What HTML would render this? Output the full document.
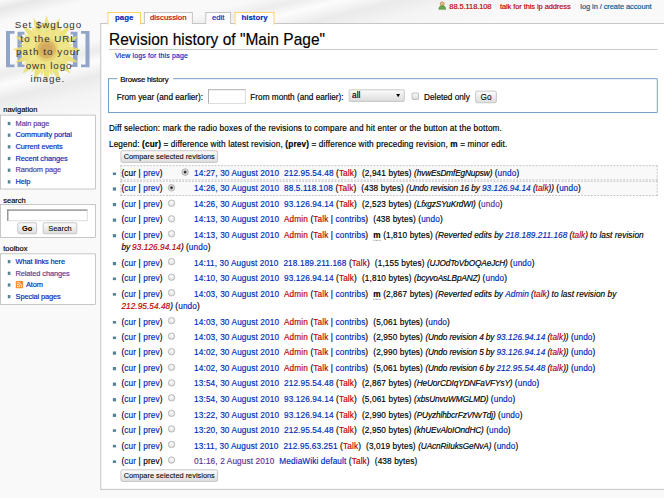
<!DOCTYPE html>
<html><head><meta charset="utf-8"><title>Revision history of "Main Page"</title>
<style>
html,body{margin:0;padding:0;width:664px;height:498px;overflow:hidden;background:#f9f9f9}
#wrap{position:absolute;left:0;top:0;width:1024px;height:768px;overflow:hidden;transform:scale(0.6484375);transform-origin:0 0;
 font-family:"Liberation Sans",sans-serif;font-size:12.7px;color:#000;background:#f9f9f9;-webkit-text-stroke:0.25px}
.bg{position:absolute;left:0;top:0;width:1024px;height:260px;
 background:
  linear-gradient(166deg,rgba(0,0,0,0) 0px,rgba(0,0,0,.07) 14px,rgba(0,0,0,0) 34px,rgba(0,0,0,0) 95px,rgba(0,0,0,.05) 112px,rgba(255,255,255,.5) 128px,rgba(0,0,0,.06) 150px,rgba(0,0,0,.02) 175px,rgba(0,0,0,0) 215px),
  #f9f9f9}
a{text-decoration:none;color:#002bb8}
a.v{color:#5a3696}
a.new{color:#ba0000}
.abs{position:absolute;white-space:nowrap}
/* personal */
#pp{position:absolute;top:0;left:0;height:20px;font-size:11.46px;line-height:12px}
#pp span{position:absolute;top:3.8px;white-space:nowrap;letter-spacing:-0.1px}
#pp a{color:#005896}
#pp a.new{color:#ba0000}
/* tabs */
.tab{position:absolute;top:19px;height:18px;border:1px solid #aaa;border-bottom:none;background:#fbfbfb;box-sizing:border-box;
 font-size:12.07px;line-height:14px;text-align:center;padding-top:0;z-index:3}
.tab.sel{border-color:#fabd23;background:#fff;font-weight:bold;height:19px}
.tab a{color:#002bb8}
.tab a.new{color:#ba0000}
/* content */
#content{position:absolute;left:155px;top:36px;width:869px;height:719px;background:#fff;border:1px solid #aaa;border-right:none;z-index:2;box-sizing:border-box}
h1{position:absolute;left:12px;top:0;width:846px;margin:0;padding:0;font-weight:normal;font-size:23.876px;line-height:28px;height:40px;border-bottom:1px solid #aaa;box-sizing:border-box}
h1 span{position:absolute;left:-0.5px;top:8.6px;font-size:25.3px;transform:scaleX(0.945);transform-origin:0 0;white-space:nowrap}
#sub{position:absolute;left:21.2px;top:42px;font-size:10.67px;line-height:12px;letter-spacing:0.25px}
#fs{position:absolute;left:11px;top:84px;width:847px;height:53px;border:1px solid #2f6fab;box-sizing:border-box}
#lg{position:absolute;left:13px;top:-7.2px;background:#fff;padding:0 7px 0 4.5px;font-size:12.07px;line-height:14px;letter-spacing:-0.35px}
.fl{position:absolute;top:20.5px;font-size:12.7px;line-height:14px}
.txt{position:absolute;box-sizing:border-box;border:1px solid #999;border-color:#888 #ccc #ccc #888;background:#fff}
.dd{position:absolute;box-sizing:border-box;border:1px solid #aaa;border-radius:2px;background:linear-gradient(#fafafa,#dcdcdc);font-size:12.7px;line-height:17px;padding-left:4px}
.dd:after{content:"";position:absolute;right:6.5px;top:5.5px;border-left:3.5px solid transparent;border-right:3.5px solid transparent;border-top:5px solid #000}
.chk{position:absolute;box-sizing:border-box;border:1px solid #999;border-radius:2px;background:linear-gradient(#fdfdfd,#d8d8d8)}
.btn{-webkit-text-stroke:0.1px;position:absolute;box-sizing:border-box;border:1px solid #a8a8a8;border-radius:3px;background:linear-gradient(#fcfcfc,#dedede);text-align:center;color:#000;white-space:nowrap}
#legend{position:absolute;left:12px;top:149px;line-height:24.4px;font-size:12.7px;letter-spacing:0.21px;white-space:nowrap}
ul#ph{position:absolute;left:30.3px;top:218px;width:828px;margin:0;padding:0;list-style:none;line-height:19px;font-size:12.7px;letter-spacing:0.2px}
#ph li{position:relative;border:1px solid #fff;padding-top:2.4px;height:auto;margin-bottom:0.5px}
#ph li.selected{background:#f9f9f9;border:1px dashed #aaa}
#ph li:before{content:"";position:absolute;left:-13px;top:9.5px;width:4.6px;height:4.6px;background:#558494}
.rd{display:inline-block;width:11px;height:11px;border-radius:50%;box-sizing:border-box;border:1px solid #9a9a9a;background:radial-gradient(circle at 50% 35%,#fcfcfc,#d6d6d6);margin:0 5px 0 4.5px;vertical-align:0.5px;position:relative}
.rd.on{background:radial-gradient(circle,#222 0,#333 1.3px,#888 2px,#d8d8d8 3px,#eee 5px);border-color:#888}
.hid{visibility:hidden}
.hu{margin-left:7.5px;margin-right:4px}
.cm{font-style:italic;letter-spacing:-0.16px}
.cm a{letter-spacing:0.1px}
.cm .w{letter-spacing:0.1px}
b.m{font-weight:bold;border-bottom:1.5px dotted #333;line-height:13px;display:inline-block}
/* sidebar */
.h3{position:absolute;left:5px;font-size:11.56px;line-height:12px;white-space:nowrap}
.pb{position:absolute;left:0;width:148px;background:#fff;border:1px solid #aaa;box-sizing:border-box}
.sb{position:absolute;left:0;top:1px;font-size:11.46px;line-height:12px;white-space:nowrap;letter-spacing:-0.18px}
.sb li{position:absolute;left:24px;list-style:none}
.sb li:before{content:"";position:absolute;left:-12.5px;top:4px;width:4.6px;height:4.6px;background:#558494}
</style></head><body>
<div id="wrap">
<div class="bg"></div>

<!-- logo -->
<svg style="position:absolute;left:0;top:0;-webkit-text-stroke:0" width="147.43" height="142.65" viewBox="0 0 95.6 92.5">
 <g fill="#8097c0" opacity="0.85">
  <path d="M6 31h8.5v2.8H10v30.7h4.5v2.8H6z"/>
  <path d="M17.5 31.8h7v2.6h-2.5v30h2.5v2.6h-7z"/>
  <path d="M89.5 31h-8.5v2.8h4.5v30.7h-4.5v2.8h8.5z"/>
  <path d="M77.5 31.8h-7v2.6h2.5v30h-2.5v2.6h7z"/>
 </g>
 <g transform="translate(46.6 49.5) scale(1.1)" opacity="0.88">
  <g fill="#ebdf6e">
   <path id="pt" d="M0 -31 C4 -20 4 -12 0 -8 C-4 -12 -4 -20 0 -31z"/>
   <use href="#pt" transform="rotate(22.5)"/><use href="#pt" transform="rotate(45)"/><use href="#pt" transform="rotate(67.5)"/>
   <use href="#pt" transform="rotate(90)"/><use href="#pt" transform="rotate(112.5)"/><use href="#pt" transform="rotate(135)"/>
   <use href="#pt" transform="rotate(157.5)"/><use href="#pt" transform="rotate(180)"/><use href="#pt" transform="rotate(202.5)"/>
   <use href="#pt" transform="rotate(225)"/><use href="#pt" transform="rotate(247.5)"/><use href="#pt" transform="rotate(270)"/>
   <use href="#pt" transform="rotate(292.5)"/><use href="#pt" transform="rotate(315)"/><use href="#pt" transform="rotate(337.5)"/>
  </g>
  <g fill="#efe37c" transform="rotate(11.25) scale(0.82)">
   <use href="#pt"/><use href="#pt" transform="rotate(22.5)"/><use href="#pt" transform="rotate(45)"/><use href="#pt" transform="rotate(67.5)"/>
   <use href="#pt" transform="rotate(90)"/><use href="#pt" transform="rotate(112.5)"/><use href="#pt" transform="rotate(135)"/>
   <use href="#pt" transform="rotate(157.5)"/><use href="#pt" transform="rotate(180)"/><use href="#pt" transform="rotate(202.5)"/>
   <use href="#pt" transform="rotate(225)"/><use href="#pt" transform="rotate(247.5)"/><use href="#pt" transform="rotate(270)"/>
   <use href="#pt" transform="rotate(292.5)"/><use href="#pt" transform="rotate(315)"/><use href="#pt" transform="rotate(337.5)"/>
  </g>
  <circle r="11" fill="#e6d264"/>
  <circle r="8.5" fill="#d6ad52"/>
  <circle r="5.5" fill="#cf9f4a"/>
 </g>
 <g font-family="Liberation Sans" font-size="9.8" fill="#333" stroke="none" text-anchor="start" transform="translate(0 0.7)">
  <text x="14.8" y="27.5" textLength="66.4" lengthAdjust="spacing">Set $wgLogo</text>
  <text x="20.6" y="41.5" textLength="55" lengthAdjust="spacing">to the URL</text>
  <text x="16.1" y="54.4" textLength="63.5" lengthAdjust="spacing">path to your</text>
  <text x="25.7" y="68" textLength="45.8" lengthAdjust="spacing">own logo</text>
  <text x="30.5" y="81.7" textLength="33.8" lengthAdjust="spacing">image.</text>
 </g>
</svg>

<!-- personal bar -->
<div id="pp">
 <svg class="abs" style="left:676px;top:2px" width="12" height="13" viewBox="0 0 12 13"><circle cx="6" cy="4" r="3.2" fill="#e9b87c" stroke="#a0724a" stroke-width="0.8"/><path d="M0.5 12.5c0-4 2.5-5.5 5.5-5.5s5.5 1.5 5.5 5.5z" fill="#6aa84f" stroke="#3d7a2a" stroke-width="0.8"/></svg>
 <span style="left:693px"><a class="new" href="#">88.5.118.108</a></span>
 <span style="left:771px"><a class="new" href="#">talk for this ip address</a></span>
 <span style="left:895px"><a href="#">log in / create account</a></span>
</div>

<!-- tabs -->
<div class="tab sel" style="left:166px;width:51px"><a href="#">page</a></div>
<div class="tab" style="left:222px;width:75px"><a class="new" href="#">discussion</a></div>
<div class="tab" style="left:317px;width:39px"><a href="#">edit</a></div>
<div class="tab sel" style="left:362px;width:61px"><a href="#">history</a></div>

<div id="content">
 <h1><span>Revision history of "Main Page"</span></h1>
 <div id="sub"><a href="#">View logs for this page</a></div>
 <div id="fs">
  <div id="lg">Browse history</div>
  <span class="fl" style="left:12px">From year (and earlier):</span>
  <span class="txt" style="left:153px;top:16px;width:58px;height:22px"></span>
  <span class="fl" style="left:218px">From month (and earlier):</span>
  <span class="dd" style="left:370px;top:16px;width:86px;height:18.5px">all</span>
  <span class="chk" style="left:467px;top:21px;width:11px;height:11px"></span>
  <span class="fl" style="left:486px">Deleted only</span>
  <span class="btn" style="left:565px;top:18px;width:33px;height:19px;font-size:12.7px;line-height:19px">Go</span>
 </div>
 <div id="legend">Diff selection: mark the radio boxes of the revisions to compare and hit enter or the button at the bottom.<br>Legend: <b>(cur)</b> = difference with latest revision, <b>(prev)</b> = difference with preceding revision, <b>m</b> = minor edit.</div>
 <span class="btn" style="left:30px;top:195px;width:150px;height:19px;font-size:11.4px;line-height:17px">Compare selected revisions</span>
 <ul id="ph">
<li class="selected">(cur | <a href="#">prev</a>) <i class="rd hid"></i><i class="rd on"></i> <a href="#">14:27, 30 August 2010</a><span class="hu"><a href="#">212.95.54.48</a> (<a class="new" href="#">Talk</a>)</span> (2,941 bytes) <i class="cm">(hvwEsDmfEgNupsw)</i> (<a href="#">undo</a>)</li>
<li class="selected">(<a href="#">cur</a> | <a href="#">prev</a>) <i class="rd on"></i><i class="rd hid"></i> <a href="#">14:26, 30 August 2010</a><span class="hu"><a href="#">88.5.118.108</a> (<a class="new" href="#">Talk</a>)</span> (438 bytes) <i class="cm">(Undo revision 16 by <a href="#">93.126.94.14</a> (<a class="new" href="#">talk</a>))</i> (<a href="#">undo</a>)</li>
<li>(<a href="#">cur</a> | <a href="#">prev</a>) <i class="rd"></i><i class="rd hid"></i> <a href="#">14:26, 30 August 2010</a><span class="hu"><a href="#">93.126.94.14</a> (<a class="new" href="#">Talk</a>)</span> (2,523 bytes) <i class="cm">(LfxgzSYuKrdWI)</i> (<a href="#" class="v">undo</a>)</li>
<li>(<a href="#">cur</a> | <a href="#">prev</a>) <i class="rd"></i><i class="rd hid"></i> <a href="#">14:13, 30 August 2010</a><span class="hu"><a href="#" class="new">Admin</a> (<a class="new" href="#">Talk</a> | <a href="#">contribs</a>)</span> (438 bytes) (<a href="#">undo</a>)</li>
<li>(<a href="#">cur</a> | <a href="#">prev</a>) <i class="rd"></i><i class="rd hid"></i> <a href="#">14:13, 30 August 2010</a><span class="hu"><a href="#" class="new">Admin</a> (<a class="new" href="#">Talk</a> | <a href="#">contribs</a>)</span> <b class="m">m</b> (1,810 bytes) <i class="cm">(<span class="w">Reverted edits by</span> <a href="#">218.189.211.168</a> (<a class="new" href="#">talk</a>) <span class="w">to last revision</span><br>by <a class="new" href="#">93.126.94.14</a>)</i> (<a href="#">undo</a>)</li>
<li>(<a href="#">cur</a> | <a href="#">prev</a>) <i class="rd"></i><i class="rd hid"></i> <a href="#">14:11, 30 August 2010</a><span class="hu"><a href="#">218.189.211.168</a> (<a class="new" href="#">Talk</a>)</span> (1,155 bytes) <i class="cm">(UJOdToVbOQAeJcH)</i> (<a href="#">undo</a>)</li>
<li>(<a href="#">cur</a> | <a href="#">prev</a>) <i class="rd"></i><i class="rd hid"></i> <a href="#">14:10, 30 August 2010</a><span class="hu"><a href="#">93.126.94.14</a> (<a class="new" href="#">Talk</a>)</span> (1,810 bytes) <i class="cm">(bcyvoAsLBpANZ)</i> (<a href="#">undo</a>)</li>
<li>(<a href="#">cur</a> | <a href="#">prev</a>) <i class="rd"></i><i class="rd hid"></i> <a href="#">14:03, 30 August 2010</a><span class="hu"><a href="#" class="new">Admin</a> (<a class="new" href="#">Talk</a> | <a href="#">contribs</a>)</span> <b class="m">m</b> (2,867 bytes) <i class="cm">(<span class="w">Reverted edits by</span> <a href="#">Admin</a> (<a class="new" href="#">talk</a>) <span class="w">to last revision by</span> <a class="new" href="#">212.95.54.48</a>)</i> (<a href="#">undo</a>)</li>
<li>(<a href="#">cur</a> | <a href="#">prev</a>) <i class="rd"></i><i class="rd hid"></i> <a href="#">14:03, 30 August 2010</a><span class="hu"><a href="#" class="new">Admin</a> (<a class="new" href="#">Talk</a> | <a href="#">contribs</a>)</span> (5,061 bytes) (<a href="#">undo</a>)</li>
<li>(<a href="#">cur</a> | <a href="#">prev</a>) <i class="rd"></i><i class="rd hid"></i> <a href="#">14:03, 30 August 2010</a><span class="hu"><a href="#" class="new">Admin</a> (<a class="new" href="#">Talk</a> | <a href="#">contribs</a>)</span> (2,950 bytes) <i class="cm">(Undo revision 4 by <a href="#">93.126.94.14</a> (<a class="new" href="#">talk</a>))</i> (<a href="#">undo</a>)</li>
<li>(<a href="#">cur</a> | <a href="#">prev</a>) <i class="rd"></i><i class="rd hid"></i> <a href="#">14:02, 30 August 2010</a><span class="hu"><a href="#" class="new">Admin</a> (<a class="new" href="#">Talk</a> | <a href="#">contribs</a>)</span> (2,990 bytes) <i class="cm">(Undo revision 5 by <a href="#">93.126.94.14</a> (<a class="new" href="#">talk</a>))</i> (<a href="#">undo</a>)</li>
<li>(<a href="#">cur</a> | <a href="#">prev</a>) <i class="rd"></i><i class="rd hid"></i> <a href="#">14:02, 30 August 2010</a><span class="hu"><a href="#" class="new">Admin</a> (<a class="new" href="#">Talk</a> | <a href="#">contribs</a>)</span> (5,061 bytes) <i class="cm">(Undo revision 6 by <a href="#">212.95.54.48</a> (<a class="new" href="#">talk</a>))</i> (<a href="#">undo</a>)</li>
<li>(<a href="#">cur</a> | <a href="#">prev</a>) <i class="rd"></i><i class="rd hid"></i> <a href="#">13:54, 30 August 2010</a><span class="hu"><a href="#">212.95.54.48</a> (<a class="new" href="#">Talk</a>)</span> (2,867 bytes) <i class="cm">(HeUorCDIqYDNFaVFYsY)</i> (<a href="#">undo</a>)</li>
<li>(<a href="#">cur</a> | <a href="#">prev</a>) <i class="rd"></i><i class="rd hid"></i> <a href="#">13:54, 30 August 2010</a><span class="hu"><a href="#">93.126.94.14</a> (<a class="new" href="#">Talk</a>)</span> (5,061 bytes) <i class="cm">(xbsUnvuWMGLMD)</i> (<a href="#">undo</a>)</li>
<li>(<a href="#">cur</a> | <a href="#">prev</a>) <i class="rd"></i><i class="rd hid"></i> <a href="#">13:22, 30 August 2010</a><span class="hu"><a href="#">93.126.94.14</a> (<a class="new" href="#">Talk</a>)</span> (2,990 bytes) <i class="cm">(PUyzhlhbcrFzVNvTdj)</i> (<a href="#">undo</a>)</li>
<li>(<a href="#">cur</a> | <a href="#">prev</a>) <i class="rd"></i><i class="rd hid"></i> <a href="#">13:20, 30 August 2010</a><span class="hu"><a href="#">212.95.54.48</a> (<a class="new" href="#">Talk</a>)</span> (2,950 bytes) <i class="cm">(khUEvAloIOndHC)</i> (<a href="#">undo</a>)</li>
<li>(<a href="#">cur</a> | <a href="#">prev</a>) <i class="rd"></i><i class="rd hid"></i> <a href="#">13:11, 30 August 2010</a><span class="hu"><a href="#">212.95.63.251</a> (<a class="new" href="#">Talk</a>)</span> (3,019 bytes) <i class="cm">(UAcnRiIuksGeNvA)</i> (<a href="#">undo</a>)</li>
<li>(<a href="#">cur</a> | prev) <i class="rd"></i><i class="rd hid"></i> <a href="#" class="v">01:16, 2 August 2010</a><span class="hu"><a href="#">MediaWiki default</a> (<a class="new" href="#">Talk</a>)</span> (438 bytes)</li>
 </ul>
 <span class="btn" id="cmp2" style="left:30px;top:687px;width:150px;height:19px;font-size:11.4px;line-height:17px">Compare selected revisions</span>
</div>

<!-- sidebar -->
<div class="h3" style="top:163px">navigation</div>
<div class="pb" style="top:177px;height:115px"></div>
<ul class="sb" style="margin:0;padding:0">
 <li style="top:183px"><a class="v" href="#">Main page</a></li>
 <li style="top:201px"><a href="#">Community portal</a></li>
 <li style="top:219px"><a href="#">Current events</a></li>
 <li style="top:237px"><a href="#">Recent changes</a></li>
 <li style="top:255px"><a class="v" href="#">Random page</a></li>
 <li style="top:273px"><a href="#">Help</a></li>
</ul>
<div class="h3" style="top:302.5px">search</div>
<div class="pb" style="top:315px;height:52px"></div>
<span class="txt" style="left:11px;top:323px;width:124px;height:18px;border-width:2px 1px 1px 2px"></span>
<span class="btn" style="left:27px;top:343px;width:30px;height:18px;font-size:11.46px;line-height:16px;font-weight:bold">Go</span>
<span class="btn" style="left:66px;top:343px;width:53px;height:18px;font-size:11.46px;line-height:16px">Search</span>
<div class="h3" style="top:377px">toolbox</div>
<div class="pb" style="top:391px;height:79px"></div>
<ul class="sb" style="margin:0;padding:0">
 <li style="top:396px"><a href="#">What links here</a></li>
 <li style="top:414px"><a class="v" href="#">Related changes</a></li>
 <li style="top:432px"><svg style="position:absolute;left:0;top:0" width="12" height="12" viewBox="0 0 12 12"><rect width="12" height="12" rx="2" fill="#f08a2c"/><circle cx="3.2" cy="8.8" r="1.3" fill="#fff"/><path d="M2 5.2a4.8 4.8 0 0 1 4.8 4.8M2 2.2a7.8 7.8 0 0 1 7.8 7.8" fill="none" stroke="#fff" stroke-width="1.4"/></svg><a href="#" style="margin-left:16px">Atom</a></li>
 <li style="top:450px"><a href="#">Special pages</a></li>
</ul>
</div>
</body></html>
